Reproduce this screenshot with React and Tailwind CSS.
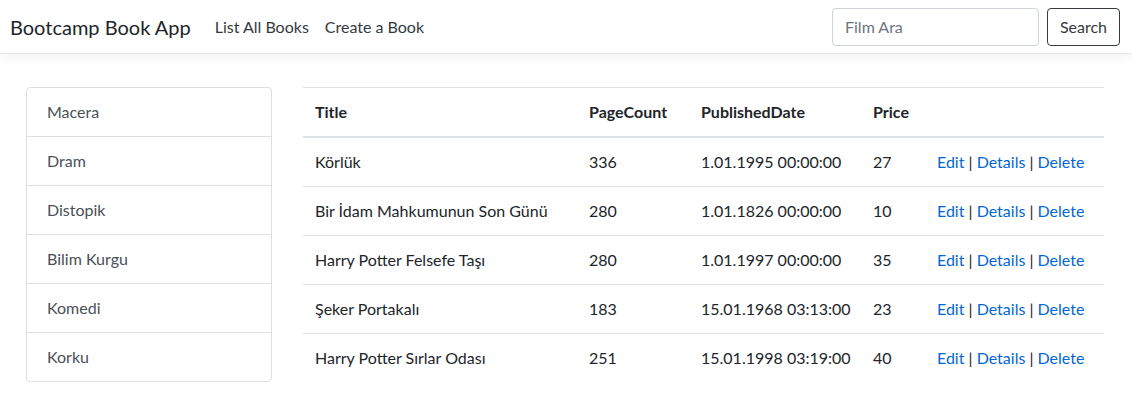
import React from "react";

const categories = ["Macera", "Dram", "Distopik", "Bilim Kurgu", "Komedi", "Korku"];

const books = [
  { title: "Körlük", pages: 336, date: "1.01.1995 00:00:00", price: 27 },
  { title: "Bir İdam Mahkumunun Son Günü", pages: 280, date: "1.01.1826 00:00:00", price: 10 },
  { title: "Harry Potter Felsefe Taşı", pages: 280, date: "1.01.1997 00:00:00", price: 35 },
  { title: "Şeker Portakalı", pages: 183, date: "15.01.1968 03:13:00", price: 23 },
  { title: "Harry Potter Sırlar Odası", pages: 251, date: "15.01.1998 03:19:00", price: 40 },
];

export default function App() {
  return (
    <div className="min-h-screen bg-white text-[#212529] text-base leading-6 font-['Segoe_UI','Lato','Open_Sans',sans-serif]">
      <nav className="h-[54px] flex items-center pl-[10px] pr-[12px] border-b border-[#e5e5e5] shadow-[0_4px_12px_rgba(0,0,0,0.05)]">
        <a className="text-[20px] leading-[30px] text-[#212529] mr-4">Bootcamp Book App</a>
        <ul className="flex">
          <li><a className="px-2 text-[#343a40]">List All Books</a></li>
          <li><a className="px-2 text-[#343a40]">Create a Book</a></li>
        </ul>
        <form className="ml-auto flex items-center">
          <input
            type="text"
            placeholder="Film Ara"
            className="w-[207px] h-[38px] px-3 border border-[#ced4da] rounded text-base text-[#495057] placeholder:text-[#6c757d] outline-none mr-[8px]"
          />
          <button type="button" className="h-[38px] w-[73px] border border-[#343a40] rounded text-[#343a40] bg-white">
            Search
          </button>
        </form>
      </nav>

      <main className="flex pt-[33px] pl-[26px] gap-[31px]">
        <ul className="w-[246px] self-start border border-[#dfdfdf] rounded">
          {categories.map((c, i) => (
            <li
              key={c}
              className={`px-5 py-3 text-[#495057] ${i > 0 ? "border-t border-[#dfdfdf]" : ""}`}
            >
              {c}
            </li>
          ))}
        </ul>

        <table className="w-[801px] table-fixed border-collapse text-left whitespace-nowrap">
          <thead>
            <tr className="border-t border-[#dee2e6] border-b-2 border-b-[#dee2e6]">
              <th className="w-[274px] p-3 font-bold">Title</th>
              <th className="w-[112px] p-3 font-bold">PageCount</th>
              <th className="w-[172px] p-3 font-bold">PublishedDate</th>
              <th className="w-[64px] p-3 font-bold">Price</th>
              <th className="p-3"></th>
            </tr>
          </thead>
          <tbody>
            {books.map((b, i) => (
              <tr key={b.title} className={i > 0 ? "border-t border-[#dee2e6]" : ""}>
                <td className="p-3">{b.title}</td>
                <td className="p-3">{b.pages}</td>
                <td className="p-3">{b.date}</td>
                <td className="p-3">{b.price}</td>
                <td className="p-3">
                  <a className="text-[#0366d6]">Edit</a> | <a className="text-[#0366d6]">Details</a> |{" "}
                  <a className="text-[#0366d6]">Delete</a>
                </td>
              </tr>
            ))}
          </tbody>
        </table>
      </main>
    </div>
  );
}
